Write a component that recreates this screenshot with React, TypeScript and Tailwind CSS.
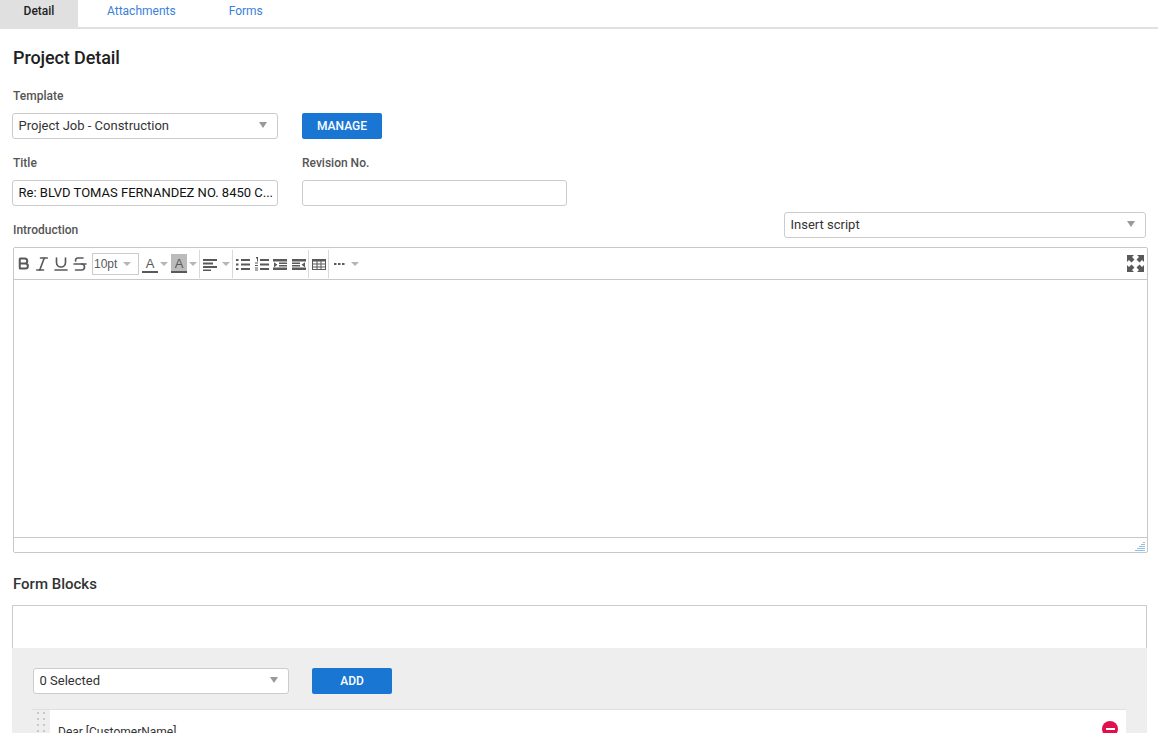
import { Bold, Italic, Strikethrough, Underline } from "lucide-react";

function Caret({ className = "" }: { className?: string }) {
  return (
    <svg width="8" height="6" viewBox="0 0 8 6" className={className}>
      <path d="M0 0h8L4 6z" fill="#999999" />
    </svg>
  );
}

function SmallCaret() {
  return (
    <svg width="8" height="4" viewBox="0 0 8 4" className="shrink-0">
      <path d="M0 0h8L4 4z" fill="#b5b5b5" />
    </svg>
  );
}

function Select({ label, width }: { label: string; width: string }) {
  return (
    <div className={`flex h-[26px] items-center justify-between rounded-[3px] border border-[#cccccc] bg-white pl-[5.500px] pr-[10px] text-[13px] text-[#333333] ${width}`}>
      <span>{label}</span>
      <Caret className="mb-[3px]" />
    </div>
  );
}

function Label({ children }: { children: string }) {
  return <div className="pl-[1px] text-[12px] font-medium leading-[14px] text-[#555555]">{children}</div>;
}

function Button({ children }: { children: string }) {
  return (
    <div className="flex h-[26px] w-[80px] items-center justify-center rounded-[2px] bg-[#1976d2] text-[12px] font-medium text-white">
      {children}
    </div>
  );
}

function Sep({ className = "" }: { className?: string }) {
  return <div className={`mx-[1px] h-[28px] w-px bg-[#d9d9d9] ${className}`} />;
}

function Tool({ d, w = 14, className = "" }: { d: string; w?: number; className?: string }) {
  return (
    <svg width={w} height="14" viewBox={`0 0 ${w} 14`} className={`shrink-0 ${className}`}>
      <path d={d} fill="#595959" fillRule="evenodd" />
    </svg>
  );
}

function ColorA({ className = "" }: { className?: string }) {
  return (
    <div className={`flex h-[19px] w-[16px] flex-col items-center justify-end font-['Liberation_Sans',sans-serif] text-[13px] leading-[15px] text-[#595959] ${className}`}>
      A
      <div className="h-[2px] w-[16px] bg-[#595959]" />
    </div>
  );
}

export default function App() {
  return (
    <div className="h-[733px] w-[1158px] overflow-hidden bg-white font-['Roboto',sans-serif]">
      <div className="flex h-[29px] border-b-2 border-[#e0e0e0]">
        <div className="flex w-[78px] items-center justify-center bg-[#e0e0e0] pb-[7px] pt-[1px] text-[12px] font-medium text-[#222222]">Detail</div>
        <div className="ml-[29px] pt-[2px] text-[12px] text-[#3b7fd9]">Attachments</div>
        <div className="ml-[53px] pt-[2px] text-[12px] text-[#3b7fd9]">Forms</div>
      </div>

      <div className="pl-[12px]">
        <h1 className="mt-[18px] pl-[1px] text-[18px] font-medium leading-[22px] tracking-[-0.1px] text-[#212121]">Project Detail</h1>

        <div className="mt-[20px]"><Label>Template</Label></div>
        <div className="mt-[10px] flex gap-[24px]">
          <Select label="Project Job - Construction" width="w-[266px]" />
          <Button>MANAGE</Button>
        </div>

        <div className="mt-[17px] flex gap-[23px]">
          <div className="w-[266px]"><Label>Title</Label></div>
          <Label>Revision No.</Label>
        </div>
        <div className="mt-[10px] flex gap-[24px]">
          <div className="flex h-[26px] w-[266px] items-center rounded-[3px] border border-[#cccccc] pl-[5.500px] text-[13px] text-[#111111]">
            <span className="truncate">Re: BLVD TOMAS FERNANDEZ NO. 8450 C...</span>
          </div>
          <div className="h-[26px] w-[265px] rounded-[3px] border border-[#cccccc]" />
        </div>

        <div className="mt-[6px] flex h-[26px] items-end justify-between pr-[12px]">
          <div className="pb-[1px]"><Label>Introduction</Label></div>
          <Select label="Insert script" width="w-[362px]" />
        </div>

        <div className="ml-[1px] mt-[9px] flex h-[306px] w-[1135px] flex-col rounded-[2px] border border-[#c8c8c8]">
          <div className="flex h-[32px] shrink-0 items-center border-b border-[#c8c8c8] pl-[2px] text-[#595959]">
            <Bold size={15} strokeWidth={3.2} className="shrink-0" />
            <Italic size={18} strokeWidth={2.2} className="ml-[2px] shrink-0" />
            <Underline size={18} strokeWidth={2.2} className="ml-[1px] shrink-0" />
            <Strikethrough size={18} strokeWidth={2.2} className="ml-[1px] shrink-0" />
            <div className="ml-[3px] flex h-[22px] w-[47px] shrink-0 items-center justify-between border border-[#cccccc] pl-[1px] pr-[7px] font-['Liberation_Sans',sans-serif] text-[12px] text-[#595959]">
              10pt
              <SmallCaret />
            </div>
            <ColorA className="ml-[3px]" />
            <div className="ml-[2px]"><SmallCaret /></div>
            <ColorA className="ml-[3px] bg-[#bbbbbb]" />
            <div className="ml-[2px] mr-[1px]"><SmallCaret /></div>
            <Sep />
            <Tool className="ml-[2px]" d="M0 2h14v2H0zM0 5.500h10v2H0zM0 9h14v2H0zM0 12.500h8V14H0z" />
            <div className="ml-[5px]"><SmallCaret /></div>
            <Sep className="ml-[2px]" />
            <Tool className="ml-[2px]" d="M0 2h2.500v2H0zM5 2h9v2H5zM0 6.500h2.500v2H0zM5 6.500h9v2H5zM0 11h2.500v2H0zM5 11h9v2H5z" />
            <Tool className="ml-[5px]" d="M1 0h2v4.500H2V1.500H1zM0 5.500h3v1H0zM0 8h3v1H0zM0 10.500h3v1H0zM0 12.500h3v1H0zM5 2h9v2H5zM5 6.500h9v2H5zM5 11h9v2H5z" />
            <Tool className="ml-[4px]" d="M0 2h14v2.500H0zM6 5.500h8V7H6zM6 8h8v1.500H6zM0 10.500h14V13H0zM1 5.200l3.500 2.600L1 10.200z" />
            <Tool className="ml-[5px]" d="M0 2h14v2.500H0zM0 5.500h8V7H0zM0 8h8v1.500H0zM0 10.500h14V13H0zM13 5.200L9.500 7.800 13 10.200z" />
            <Sep className="ml-[2px]" />
            <Tool className="ml-[2px]" d="M0 2h14v11H0zM1 4.500v2h3.500v-2zM5.500 4.500v2h3v-2zM9.500 4.500v2H13v-2zM1 7.500v2h3.500v-2zM5.500 7.500v2h3v-2zM9.500 7.500v2H13v-2zM1 10.500V12h3.500v-1.500zM5.500 10.500V12h3v-1.500zM9.500 10.500V12H13v-1.500z" />
            <Sep className="ml-[2px]" />
            <Tool className="ml-[4px]" w={13} d="M0 6h2.500v2H0zM4 6h2.500v2H4zM8 6h2.500v2H8z" />
            <div className="ml-[4px]"><SmallCaret /></div>
            <svg width="17" height="17" viewBox="0 0 17 17" className="ml-auto mr-[3px] shrink-0">
              <path d="M0 0h7L5 2l2.500 2.500-3 3L2 5 0 7zM17 0v7l-2-2-2.500 2.500-3-3L12 2l-2-2zM0 17v-7l2 2 2.500-2.500 3 3L5 15l2 2zM17 17h-7l2-2-2.500-2.500 3-3L15 12l2-2z" fill="#595959" />
            </svg>
          </div>
          <div className="flex-1" />
          <div className="relative h-[15px] shrink-0 border-t border-[#c8c8c8]">
            <svg width="10" height="10" viewBox="0 0 10 10" className="absolute bottom-[1px] right-[2px]">
              <path d="M8 1h2v1H8zM6 3h4v1H6zM4 5h6v1H4zM2 7h8v1H2zM0 9h10v1H0z" fill="#8fc1ea" />
            </svg>
          </div>
        </div>

        <h2 className="mt-[22px] pl-[1px] text-[15px] font-medium leading-[19px] text-[#333333]">Form Blocks</h2>

        <div className="mt-[11px] w-[1135px]">
          <div className="h-[43px] border-x border-t border-[#cccccc] bg-white" />
          <div className="bg-[#eeeeee] px-[21px] pt-[20px]">
            <div className="flex gap-[23px]">
              <Select label="0 Selected" width="w-[256px]" />
              <Button>ADD</Button>
            </div>
            <div className="-ml-[1px] mt-[15px] flex h-[60px] w-[1094px] border-t border-[#e0e0e0] bg-white">
              <div className="grid h-full w-[18px] grid-cols-[2px_2px] content-start justify-center gap-x-[4px] gap-y-[4px] bg-[#eeeeee] pt-[2px]">
                {Array.from({ length: 8 }).map((_, i) => (
                  <div key={i} className="h-[2px] w-[2px] bg-[#c8c8c8]" />
                ))}
              </div>
              <div className="pl-[8px] pt-[13px] text-[12px] text-[#333333]">Dear [CustomerName]</div>
              <div className="ml-auto mr-[8px] mt-[11px] flex h-[16px] w-[16px] items-center justify-center rounded-full bg-[#e0104f]">
                <div className="h-[2.500px] w-[9px] bg-white" />
              </div>
            </div>
          </div>
        </div>
      </div>
    </div>
  );
}
